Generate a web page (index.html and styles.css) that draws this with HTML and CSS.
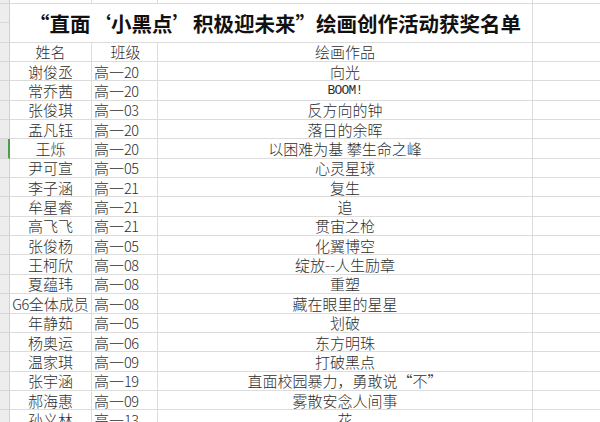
FILE: index.html
```html
<!DOCTYPE html>
<html lang="zh-CN">
<head>
<meta charset="utf-8">
<title>获奖名单</title>
<link rel="stylesheet" href="styles.css">
</head>
<body>
<div class="sheet">
  <div class="row top"><div class="rh"></div><div class="c a"></div><div class="c b"></div><div class="c w"></div><div class="c d"></div></div>
  <div class="row title-row">
    <div class="rh rh2"><div></div><div></div></div>
    <div class="c title">“直面‘小黑点’积极迎未来”绘画创作活动获奖名单</div>
    <div class="c d d2"><div></div><div></div></div>
  </div>
  <div class="row"><div class="rh"></div><div class="c a">姓名</div><div class="c b hd">班级</div><div class="c w">绘画作品</div><div class="c d"></div></div>
  <div class="row"><div class="rh"></div><div class="c a">谢俊丞</div><div class="c b">高一<span class="n">20</span></div><div class="c w">向光</div><div class="c d"></div></div>
  <div class="row"><div class="rh"></div><div class="c a">常乔茜</div><div class="c b">高一<span class="n">20</span></div><div class="c w"><span class="latin">BOOM!</span></div><div class="c d"></div></div>
  <div class="row"><div class="rh"></div><div class="c a">张俊琪</div><div class="c b">高一<span class="n">03</span></div><div class="c w">反方向的钟</div><div class="c d"></div></div>
  <div class="row"><div class="rh"></div><div class="c a">孟凡钰</div><div class="c b">高一<span class="n">20</span></div><div class="c w">落日的余晖</div><div class="c d"></div></div>
  <div class="row"><div class="rh sel"></div><div class="c a">王烁</div><div class="c b">高一<span class="n">20</span></div><div class="c w">以困难为基 攀生命之峰</div><div class="c d"></div></div>
  <div class="row"><div class="rh"></div><div class="c a">尹可宣</div><div class="c b">高一<span class="n">05</span></div><div class="c w">心灵星球</div><div class="c d"></div></div>
  <div class="row"><div class="rh"></div><div class="c a">李子涵</div><div class="c b">高一<span class="n">21</span></div><div class="c w">复生</div><div class="c d"></div></div>
  <div class="row"><div class="rh"></div><div class="c a">牟星睿</div><div class="c b">高一<span class="n">21</span></div><div class="c w">追</div><div class="c d"></div></div>
  <div class="row"><div class="rh"></div><div class="c a">高飞飞</div><div class="c b">高一<span class="n">21</span></div><div class="c w">贯宙之枪</div><div class="c d"></div></div>
  <div class="row"><div class="rh"></div><div class="c a">张俊杨</div><div class="c b">高一<span class="n">05</span></div><div class="c w">化翼博空</div><div class="c d"></div></div>
  <div class="row"><div class="rh"></div><div class="c a">王柯欣</div><div class="c b">高一<span class="n">08</span></div><div class="c w">绽放--人生励章</div><div class="c d"></div></div>
  <div class="row"><div class="rh"></div><div class="c a">夏蕴玮</div><div class="c b">高一<span class="n">08</span></div><div class="c w">重塑</div><div class="c d"></div></div>
  <div class="row"><div class="rh"></div><div class="c a"><span class="n">G6</span>全体成员</div><div class="c b">高一<span class="n">08</span></div><div class="c w">藏在眼里的星星</div><div class="c d"></div></div>
  <div class="row"><div class="rh"></div><div class="c a">年静茹</div><div class="c b">高一<span class="n">05</span></div><div class="c w">划破</div><div class="c d"></div></div>
  <div class="row"><div class="rh"></div><div class="c a">杨奥运</div><div class="c b">高一<span class="n">06</span></div><div class="c w">东方明珠</div><div class="c d"></div></div>
  <div class="row"><div class="rh"></div><div class="c a">温家琪</div><div class="c b">高一<span class="n">09</span></div><div class="c w">打破黑点</div><div class="c d"></div></div>
  <div class="row"><div class="rh"></div><div class="c a">张宇涵</div><div class="c b">高一<span class="n">19</span></div><div class="c w">直面校园暴力，勇敢说“不”</div><div class="c d"></div></div>
  <div class="row"><div class="rh"></div><div class="c a">郝海惠</div><div class="c b">高一<span class="n">09</span></div><div class="c w">雾散安念人间事</div><div class="c d"></div></div>
  <div class="row"><div class="rh"></div><div class="c a">孙义林</div><div class="c b">高一<span class="n">13</span></div><div class="c w">花</div><div class="c d"></div></div>
</div>
</body>
</html>
```
FILE: styles.css
```css
* { box-sizing: border-box; }
html, body {
  margin: 0;
  padding: 0;
  background: #ffffff;
  overflow: hidden;
}
body {
  width: 600px;
  height: 422px;
  font-family: "Noto Sans CJK SC", "Noto Sans", sans-serif;
  font-size: 15px;
  font-weight: 300;
  color: #2e2e2e;
}
.sheet {
  display: flex;
  flex-direction: column;
}
.row {
  display: grid;
  grid-template-columns: 10px 82px 66px 375px 80px;
  height: 19.35px;
  flex: none;
}
.row.top { height: 4px; }
.row.title-row { height: 38.7px; }
.rh {
  background: #ededed;
  border-right: 1px solid #cfcfcf;
  border-bottom: 1px solid #d6d6d6;
}
.rh.sel {
  background: #dedede;
  border-right: 2px solid #4a9e4a;
}
.rh2, .d2 {
  display: flex;
  flex-direction: column;
  border-bottom: none;
}
.rh2 > div, .d2 > div {
  flex: 1;
  border-bottom: 1px solid #d9d9d9;
}
.c {
  border-right: 1px solid #dcdcdc;
  border-bottom: 1px solid #dcdcdc;
  display: flex;
  align-items: center;
  justify-content: center;
  white-space: nowrap;
  overflow: visible;
  line-height: 15px;
}
.c.b {
  justify-content: flex-start;
  padding-left: 2px;
}
.c.b.hd {
  justify-content: center;
}
.c.d { border-right: none; }
.title {
  grid-column: 2 / span 3;
  font-size: 20.5px;
  font-weight: 700;
  line-height: 22px;
  color: #111;
  padding-left: 8px;
}
.n {
  letter-spacing: -0.6px;
  font-size: 14.5px;
}
.latin {
  font-family: "Liberation Mono", monospace;
  font-size: 13px;
  font-weight: 400;
  letter-spacing: -0.8px;
}
```
